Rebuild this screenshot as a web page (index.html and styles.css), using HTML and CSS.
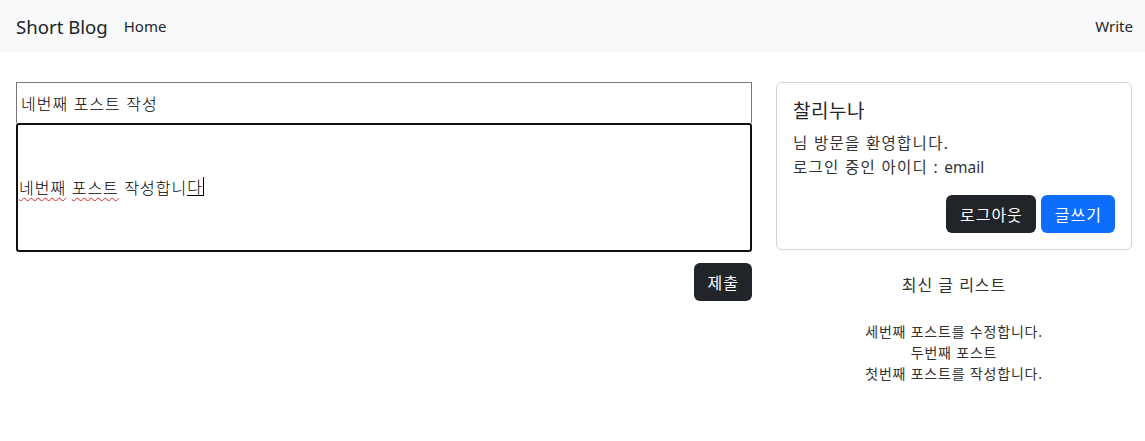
FILE: index.html
```html
<!DOCTYPE html>
<html lang="ko">

<head>
    <title>Short Blog</title>
    <link rel="stylesheet" href="styles.css">
</head>

<body>
    <nav class="navbar">
        <div class="nav-left">
            <a class="brand" href="#">Short Blog</a>
            <a class="nav-link" href="#">Home</a>
        </div>
        <a class="nav-link" href="#">Write</a>
    </nav>
    <main class="page">
        <section class="write-col">
            <input class="title-input" type="text" value="네번째 포스트 작성" />
            <div class="body-input"><span class="typo">네번째</span>&nbsp;<span class="typo">포스트</span>&nbsp;작성합니<span class="compose">다</span></div>
            <div class="submit-row">
                <button class="btn btn-dark">제출</button>
            </div>
        </section>
        <aside class="side-col">
            <div class="card">
                <h5 class="card-title">찰리누나</h5>
                <p class="card-text">님 방문을 환영합니다.</p>
                <p class="card-text">로그인 중인 아이디 : <span class="latin">email</span></p>
                <div class="card-actions">
                    <button class="btn btn-dark">로그아웃</button>
                    <button class="btn btn-blue">글쓰기</button>
                </div>
            </div>
            <h6 class="list-title">최신 글 리스트</h6>
            <ul class="post-list">
                <li>세번째 포스트를 수정합니다.</li>
                <li>두번째 포스트</li>
                <li>첫번째 포스트를 작성합니다.</li>
            </ul>
        </aside>
    </main>
</body>

</html>
```

FILE: styles.css
```css
body {
    margin: 0;
    font-family: "Noto Sans", "Noto Sans CJK KR", sans-serif;
    color: #212529;
    background: #fff;
}

.navbar {
    height: 52px;
    background-color: #f8f9fa;
    display: flex;
    align-items: center;
    justify-content: space-between;
    padding: 0 12px 0 16px;
}

.nav-left {
    display: flex;
    align-items: center;
}

.brand {
    font-size: 18.6px;
    color: #212529;
    text-decoration: none;
    margin-right: 16px;
}

.nav-link {
    font-size: 15px;
    color: #212529;
    text-decoration: none;
}

.page {
    display: flex;
    gap: 24px;
    padding: 30px 13px 0 16px;
}

.write-col {
    flex: 0 0 736px;
}

.title-input {
    display: block;
    box-sizing: border-box;
    width: 100%;
    height: 41px;
    margin: 0;
    padding: 0 4px;
    border: 1px solid #767676;
    border-bottom: none;
    font-family: "Noto Sans CJK KR", sans-serif;
    font-size: 16px;
    letter-spacing: 1px;
    font-weight: 300;
    color: #000;
    outline: none;
}

.body-input {
    box-sizing: border-box;
    height: 129px;
    border: 2px solid #101010;
    border-radius: 3px;
    display: flex;
    align-items: center;
    padding: 0 1px 2px;
    font-family: "Noto Sans CJK KR", sans-serif;
    font-size: 16px;
    letter-spacing: 1px;
    font-weight: 300;
    color: #000;
}

.typo {
    text-decoration: underline wavy #e02020;
    text-decoration-thickness: 1px;
    text-underline-offset: 3px;
}

.compose {
    border-bottom: 1px solid #000;
    border-right: 1px solid #000;
    line-height: 18px;
}

.submit-row {
    display: flex;
    justify-content: flex-end;
    margin-top: 11px;
}

.btn {
    border: none;
    border-radius: 6px;
    padding: 0 13px 0 14px;
    height: 38px;
    font-family: "Noto Sans CJK KR", sans-serif;
    font-size: 16px;
    letter-spacing: 1px;
    color: #fff;
    cursor: pointer;
}

.btn-dark {
    background-color: #212529;
}

.btn-blue {
    background-color: #0d6efd;
}

.side-col {
    flex: 0 0 356px;
}

.card {
    border: 1px solid #d3d3d3;
    border-radius: 6px;
    padding: 14px 16px 16px;
    height: 168px;
    box-sizing: border-box;
}

.card-title {
    font-size: 19px;
    font-weight: 400;
    margin: 0 0 6px;
    line-height: 28px;
    letter-spacing: 0.5px;
}

.card-text {
    margin: 0;
    font-size: 15.5px;
    letter-spacing: 1.3px;
    line-height: 24px;
    color: #333;
}

.latin {
    letter-spacing: 0;
}

.card-actions {
    display: flex;
    justify-content: flex-end;
    gap: 5px;
    margin-top: 16px;
}

.list-title {
    text-align: center;
    font-size: 16px;
    letter-spacing: 1px;
    font-weight: 400;
    margin: 23px 0 0;
    line-height: 24px;
    color: #333;
}

.post-list {
    list-style: none;
    padding: 0;
    margin: 24px 0 0;
    text-align: center;
    font-size: 14px;
    letter-spacing: 0.8px;
    line-height: 21px;
    color: #333;
}
```
